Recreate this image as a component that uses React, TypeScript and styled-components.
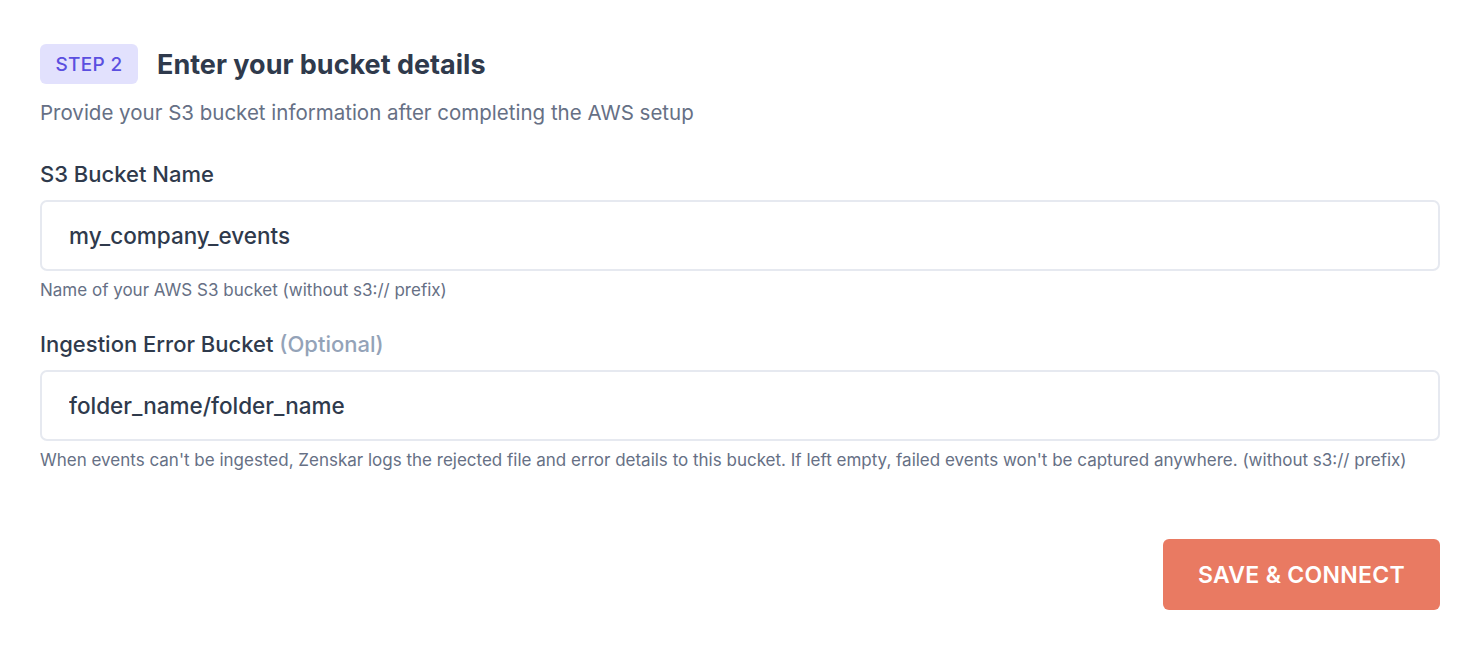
import styled, { createGlobalStyle } from "styled-components";

const GlobalStyle = createGlobalStyle`
  body {
    margin: 0;
    background: #ffffff;
    font-family: Inter, "Noto Sans", sans-serif;
    color: #2f3a4c;
  }
`;

const Page = styled.div`
  padding: 44px 43px 38px 40px;
  display: flex;
  flex-direction: column;
`;

const Heading = styled.div`
  display: flex;
  align-items: center;
  gap: 19px;
`;

const StepBadge = styled.span`
  display: inline-flex;
  align-items: center;
  justify-content: center;
  width: 98px;
  height: 40px;
  border-radius: 6px;
  background: #e2e1fd;
  color: #5b4fe0;
  font-size: 19px;
  font-weight: 500;
  letter-spacing: 0.3px;
`;

const Title = styled.h1`
  margin: 0;
  font-size: 27px;
  font-weight: 700;
  color: #2f3a4c;
`;

const Subtitle = styled.p`
  margin: 16px 0 0;
  font-size: 20.5px;
  color: #667085;
`;

const Field = styled.div<{ $top: number }>`
  display: flex;
  flex-direction: column;
  margin-top: ${(p) => p.$top}px;
`;

const Label = styled.label`
  font-size: 22px;
  font-weight: 500;
  color: #2f3a4c;
`;

const Optional = styled.span`
  color: #94a3b8;
`;

const Input = styled.input`
  margin-top: 13px;
  height: 71px;
  box-sizing: border-box;
  border: 2px solid #e6e9f0;
  border-radius: 7px;
  padding: 0 27px;
  font-family: inherit;
  font-size: 22.5px;
  font-weight: 500;
  color: #2f3a4c;
  outline: none;
`;

const Help = styled.div`
  margin-top: 9px;
  font-size: 17px;
  color: #667085;
`;

const Actions = styled.div`
  display: flex;
  justify-content: flex-end;
  margin-top: 69px;
`;

const Button = styled.button`
  width: 277px;
  height: 71px;
  border: none;
  border-radius: 6px;
  background: #e97a62;
  color: #ffffff;
  font-family: inherit;
  font-size: 23px;
  font-weight: 600;
  letter-spacing: 0.3px;
`;

export default function App() {
  return (
    <>
      <GlobalStyle />
      <Page>
        <Heading>
          <StepBadge>STEP 2</StepBadge>
          <Title>Enter your bucket details</Title>
        </Heading>
        <Subtitle>Provide your S3 bucket information after completing the AWS setup</Subtitle>

        <Field $top={36}>
          <Label>S3 Bucket Name</Label>
          <Input defaultValue="my_company_events" />
          <Help>Name of your AWS S3 bucket (without s3:// prefix)</Help>
        </Field>

        <Field $top={31}>
          <Label>
            Ingestion Error Bucket <Optional>(Optional)</Optional>
          </Label>
          <Input defaultValue="folder_name/folder_name" />
          <Help>
            When events can't be ingested, Zenskar logs the rejected file and error details to this
            bucket. If left empty, failed events won't be captured anywhere. (without s3:// prefix)
          </Help>
        </Field>

        <Actions>
          <Button>SAVE &amp; CONNECT</Button>
        </Actions>
      </Page>
    </>
  );
}
